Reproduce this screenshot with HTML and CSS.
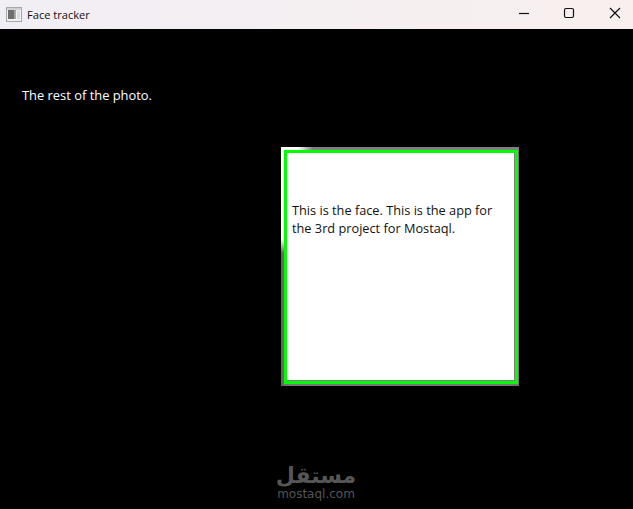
FILE: index.html
```html
<!DOCTYPE html>
<html lang="en">
<head>
    <meta charset="UTF-8">
    <title>Face tracker</title>
    <link rel="stylesheet" href="styles.css">
</head>
<body>
    <div class="titlebar">
        <svg class="app-icon" width="16" height="16" viewBox="0 0 16 16">
            <rect x="0.5" y="0.5" width="15" height="14" fill="#f2f2f2" stroke="#a8a8a8"/>
            <rect x="1" y="1" width="14" height="2" fill="#d0d0d0"/>
            <rect x="2" y="3" width="6" height="9" fill="#6e6e6e"/>
            <rect x="8" y="3" width="2" height="9" fill="#a5a5a5"/>
            <rect x="11" y="4" width="3" height="8" fill="#dcdcdc"/>
        </svg>
        <span class="title">Face tracker</span>
        <div class="controls">
            <svg width="20" height="29" viewBox="0 0 20 29"><path d="M5 13.5H15" stroke="#111" stroke-width="1.2" fill="none"/></svg>
            <svg width="20" height="29" viewBox="0 0 20 29"><rect x="5.5" y="8.5" width="9" height="9" rx="1.5" stroke="#111" stroke-width="1.2" fill="none"/></svg>
            <svg width="20" height="29" viewBox="0 0 20 29"><path d="M5 8L15 18M15 8L5 18" stroke="#111" stroke-width="1.2" fill="none"/></svg>
        </div>
    </div>
    <div class="canvas">
        <p class="rest">The rest of the photo.</p>
        <div class="face">
            <p class="face-text">This is the face. This is the app for the 3rd project for Mostaql.</p>
        </div>
        <div class="watermark">
            <span class="wm-ar" lang="ar" dir="rtl">مستقل</span>
            <span class="wm-en">mostaql.com</span>
        </div>
    </div>
</body>
</html>
```

FILE: styles.css
```css
* {
    margin: 0;
    padding: 0;
    box-sizing: border-box;
}

html, body {
    width: 100%;
    height: 100%;
    overflow: hidden;
}

body {
    display: flex;
    flex-direction: column;
    font-family: "Open Sans", sans-serif;
    background-color: #000000;
}

.titlebar {
    height: 29px;
    display: flex;
    align-items: center;
    padding-left: 6px;
    padding-right: 8px;
    background: linear-gradient(90deg, #f1eef5, #f8f0ee);
    color: #111111;
    font-size: 11.1px;
}

.app-icon {
    margin-right: 5px;
}

.controls {
    margin-left: auto;
    display: flex;
    gap: 25px;
}

.controls svg {
    display: block;
}

.controls svg:last-child {
    margin-left: 1px;
}

.canvas {
    flex: 1;
    position: relative;
    padding-top: 57px;
    color: #ffffff;
}

.rest {
    margin-left: 22px;
    font-size: 12.9px;
    line-height: 18px;
}

/* the strip round the green box: white at the top left, grey further on */
.face {
    width: 238px;
    height: 239px;
    margin-top: 43px;
    margin-left: 281px;
    padding: 3px 1px 2px 3px;
    background:
        linear-gradient(90deg, #ffffff 17px, #808080 32px) top / 100% 3px no-repeat,
        linear-gradient(180deg, #ffffff 92px, #666666 106px) left / 3px 100% no-repeat,
        #747474;
    color: #111111;
    font-size: 12.75px;
    line-height: 18px;
}

.face-text {
    height: 100%;
    padding: 48px 18px 0 5px;
    background-color: #ffffff;
    border: 3px solid #00ff00;
    box-shadow: inset -1px -1px 0 #808080;
}

.watermark {
    position: absolute;
    left: 277px;
    top: 435px;
    width: 78px;
    display: flex;
    flex-direction: column;
    align-items: center;
    color: #565656;
}

.wm-ar {
    font-family: "DejaVu Sans", sans-serif;
    font-size: 22px;
    line-height: 24px;
    font-weight: bold;
}

.wm-en {
    font-family: "DejaVu Sans", sans-serif;
    font-size: 12px;
    line-height: 12px;
}
```
